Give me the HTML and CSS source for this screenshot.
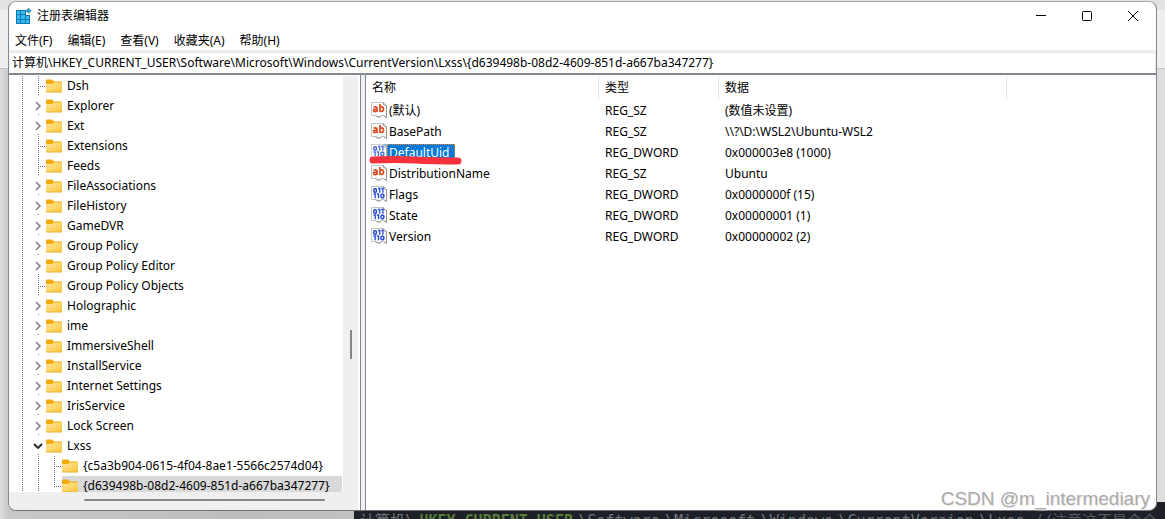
FILE: index.html
```html
<!DOCTYPE html>
<html lang="zh-CN">
<head>
<meta charset="utf-8">
<title>注册表编辑器</title>
<link rel="stylesheet" href="styles.css">
</head>
<body>
<svg class="symbols" aria-hidden="true">
  <defs>
    <linearGradient id="paper" x1="0" y1="0" x2="1" y2="1"><stop offset="0" stop-color="#ffe49b"/><stop offset="1" stop-color="#fcc83a"/></linearGradient>
  </defs>
  <symbol id="folder" viewBox="0 0 16 14">
    <path d="M0 1.5Q0 .5 1 .5H6L8 2.5H15Q16 2.5 16 3.5V8H0Z" fill="#f0ab09"/>
    <path d="M0 5H6L8 3.5H16V13H0Z" fill="url(#paper)"/>
    <path d="M0 13H16" stroke="#e9ae2b"/>
  </symbol>
  <symbol id="closed" viewBox="0 0 8 10"><path d="M2 1L6 5L2 9" fill="none" stroke="#858585" stroke-width="1.6"/></symbol>
  <symbol id="open" viewBox="0 0 10 8"><path d="M1 2L5 6L9 2" fill="none" stroke="#202020" stroke-width="1.8"/></symbol>
  <symbol id="sheet" viewBox="0 0 16 16">
    <path d="M.5 .5H12.5L15.500 3.500V15.500L12.500 13.500H11L9 15H7L4 13.500H.5Z" fill="#fbfbfb" stroke="#c4c4c4"/>
    <path d="M12.500 .5V2.500L15.500 3.500V15.500L12.500 13.500M10.500 13.500L9 15H7L4.500 13.500" fill="none" stroke="#969696"/>
  </symbol>
  <symbol id="text-value" viewBox="0 0 16 16">
    <use href="#sheet"/>
    <path d="M2.500 5.200Q6 4 6 6.500V10M6 7Q2.500 6.800 2.500 8.500Q3 10.300 6 9M9 2V10M9 5.500Q12.500 3.800 12.500 7Q12.300 10.300 9 9" fill="none" stroke="#dc4a20" stroke-width="1.700"/>
  </symbol>
  <symbol id="number-value" viewBox="0 0 16 16">
    <use href="#sheet"/>
    <rect x="2.800" y="2.800" width="2.600" height="3.400" rx="1" fill="none" stroke="#254bd0" stroke-width="1.500"/>
    <rect x="10" y="8.300" width="2.800" height="3.400" rx="1" fill="none" stroke="#254bd0" stroke-width="1.500"/>
    <path d="M7 2.500H8.700V6.800M10.200 2.500H11.900V6.800M2.500 8H4.200V12.300M5.800 8H7.500V12.300" fill="none" stroke="#254bd0" stroke-width="1.300"/>
  </symbol>
</svg>

<div class="terminal" aria-hidden="true">
  <span class="cjk">计算机\</span><b>HKEY_CURRENT_USER</b><span>\Software</span><span>\Microsoft</span><span>\Windows</span><span>\CurrentVersion</span><span>\Lxss</span><span class="note">//注意这不是个个</span>
</div>
<div class="backdrop-line first"></div>
<div class="backdrop-line second"></div>

<main class="window">
  <header class="titlebar">
    <svg class="app-icon" viewBox="0 0 16 16">
      <path d="M0 2H10L14 6V16H0Z" fill="#0f78ad"/>
      <path d="M1 3H4V6H1ZM5 3H9V6H5ZM1 7H4V11H1ZM5 7H9V11H5ZM10 8H13V11H10ZM1 12H4V15H1ZM5 12H9V15H5ZM10 12H13V15H10Z" fill="#35bdf0"/>
      <path d="M10 1H16V7H10Z" fill="#fff"/>
      <path d="M12.500 0L15.500 2.800L12.500 5.600L9.700 2.800Z" fill="#1d86ba"/><path d="M12.500 1L14 2.700L12.500 4Z" fill="#4cc5ef"/>
    </svg>
    <h1>注册表编辑器</h1>
    <div class="caption-buttons">
      <button aria-label="最小化"><svg viewBox="0 0 12 12"><path d="M1 5.500H11"/></svg></button>
      <button aria-label="最大化"><svg viewBox="0 0 12 12"><rect x="1.500" y="1.500" width="9" height="9" rx="1"/></svg></button>
      <button aria-label="关闭"><svg viewBox="0 0 12 12"><path d="M1 1L11 11M11 1L1 11"/></svg></button>
    </div>
  </header>
  <nav class="menu">
    <button>文件(F)</button><button>编辑(E)</button><button>查看(V)</button><button>收藏夹(A)</button><button>帮助(H)</button>
  </nav>
  <div class="address"><input aria-label="地址" value="计算机\HKEY_CURRENT_USER\Software\Microsoft\Windows\CurrentVersion\Lxss\{d639498b-08d2-4609-851d-a667ba347277}"></div>

  <div class="panes">
    <section class="tree-pane">
      <ul class="tree">
        <li><i class="guide"></i><i class="guide leaf"></i><svg class="folder"><use href="#folder"/></svg><span>Dsh</span></li>
        <li><i class="guide"></i><button class="toggle" aria-label="展开 Explorer"><svg><use href="#closed"/></svg></button><svg class="folder"><use href="#folder"/></svg><span>Explorer</span></li>
        <li><i class="guide"></i><button class="toggle" aria-label="展开 Ext"><svg><use href="#closed"/></svg></button><svg class="folder"><use href="#folder"/></svg><span>Ext</span></li>
        <li><i class="guide"></i><i class="guide leaf"></i><svg class="folder"><use href="#folder"/></svg><span>Extensions</span></li>
        <li><i class="guide"></i><i class="guide leaf"></i><svg class="folder"><use href="#folder"/></svg><span>Feeds</span></li>
        <li><i class="guide"></i><button class="toggle" aria-label="展开 FileAssociations"><svg><use href="#closed"/></svg></button><svg class="folder"><use href="#folder"/></svg><span>FileAssociations</span></li>
        <li><i class="guide"></i><button class="toggle" aria-label="展开 FileHistory"><svg><use href="#closed"/></svg></button><svg class="folder"><use href="#folder"/></svg><span>FileHistory</span></li>
        <li><i class="guide"></i><button class="toggle" aria-label="展开 GameDVR"><svg><use href="#closed"/></svg></button><svg class="folder"><use href="#folder"/></svg><span>GameDVR</span></li>
        <li><i class="guide"></i><button class="toggle" aria-label="展开 Group Policy"><svg><use href="#closed"/></svg></button><svg class="folder"><use href="#folder"/></svg><span>Group Policy</span></li>
        <li><i class="guide"></i><button class="toggle" aria-label="展开 Group Policy Editor"><svg><use href="#closed"/></svg></button><svg class="folder"><use href="#folder"/></svg><span>Group Policy Editor</span></li>
        <li><i class="guide"></i><i class="guide leaf"></i><svg class="folder"><use href="#folder"/></svg><span>Group Policy Objects</span></li>
        <li><i class="guide"></i><button class="toggle" aria-label="展开 Holographic"><svg><use href="#closed"/></svg></button><svg class="folder"><use href="#folder"/></svg><span>Holographic</span></li>
        <li><i class="guide"></i><button class="toggle" aria-label="展开 ime"><svg><use href="#closed"/></svg></button><svg class="folder"><use href="#folder"/></svg><span>ime</span></li>
        <li><i class="guide"></i><button class="toggle" aria-label="展开 ImmersiveShell"><svg><use href="#closed"/></svg></button><svg class="folder"><use href="#folder"/></svg><span>ImmersiveShell</span></li>
        <li><i class="guide"></i><button class="toggle" aria-label="展开 InstallService"><svg><use href="#closed"/></svg></button><svg class="folder"><use href="#folder"/></svg><span>InstallService</span></li>
        <li><i class="guide"></i><button class="toggle" aria-label="展开 Internet Settings"><svg><use href="#closed"/></svg></button><svg class="folder"><use href="#folder"/></svg><span>Internet Settings</span></li>
        <li><i class="guide"></i><button class="toggle" aria-label="展开 IrisService"><svg><use href="#closed"/></svg></button><svg class="folder"><use href="#folder"/></svg><span>IrisService</span></li>
        <li><i class="guide"></i><button class="toggle" aria-label="展开 Lock Screen"><svg><use href="#closed"/></svg></button><svg class="folder"><use href="#folder"/></svg><span>Lock Screen</span></li>
        <li><i class="guide"></i><button class="toggle" aria-label="折叠 Lxss"><svg class="down"><use href="#open"/></svg></button><svg class="folder"><use href="#folder"/></svg><span>Lxss</span></li>
        <li><i class="guide"></i><i class="guide"></i><i class="guide leaf"></i><svg class="folder"><use href="#folder"/></svg><span>{c5a3b904-0615-4f04-8ae1-5566c2574d04}</span></li>
        <li><i class="guide"></i><i class="guide"></i><i class="guide leaf last"></i><div class="selected-key"><svg class="folder"><use href="#folder"/></svg><span>{d639498b-08d2-4609-851d-a667ba347277}</span></div></li>
      </ul>
      <div class="scroll-y"><div class="thumb"></div></div>
      <div class="scroll-x"><div class="thumb"></div></div>
    </section>
    <div class="splitter"></div>
    <section class="list-pane">
      <table>
        <colgroup><col class="col-name"><col class="col-type"><col class="col-data"><col></colgroup>
        <thead><tr><th>名称</th><th>类型</th><th>数据</th><td></td></tr></thead>
        <tbody>
          <tr><td><div class="value"><svg><use href="#text-value"/></svg><span>(默认)</span></div></td><td>REG_SZ</td><td>(数值未设置)</td></tr>
          <tr><td><div class="value"><svg><use href="#text-value"/></svg><span>BasePath</span></div></td><td>REG_SZ</td><td>\\?\D:\WSL2\Ubuntu-WSL2</td></tr>
          <tr><td><div class="value selected"><svg><use href="#number-value"/></svg><span>DefaultUid</span><svg class="marker" viewBox="0 0 94 10"><path d="M4 5Q25 4 45 5T89 6" fill="none" stroke="#f8323c" stroke-width="7" stroke-linecap="round"/></svg></div></td><td>REG_DWORD</td><td>0x000003e8 (1000)</td></tr>
          <tr><td><div class="value"><svg><use href="#text-value"/></svg><span>DistributionName</span></div></td><td>REG_SZ</td><td>Ubuntu</td></tr>
          <tr><td><div class="value"><svg><use href="#number-value"/></svg><span>Flags</span></div></td><td>REG_DWORD</td><td>0x0000000f (15)</td></tr>
          <tr><td><div class="value"><svg><use href="#number-value"/></svg><span>State</span></div></td><td>REG_DWORD</td><td>0x00000001 (1)</td></tr>
          <tr><td><div class="value"><svg><use href="#number-value"/></svg><span>Version</span></div></td><td>REG_DWORD</td><td>0x00000002 (2)</td></tr>
        </tbody>
      </table>
    </section>
  </div>
</main>
<div class="watermark">CSDN @m_intermediary</div>
</body>
</html>
```
FILE: styles.css
```css
* { box-sizing: border-box; }

body {
  margin: 0;
  height: 100vh;
  display: flex;
  overflow: hidden;
  position: relative;
  padding: 1px 8px 8px;
  background: linear-gradient(90deg, #dcdcdc, #c8c8c8 8px, #bdbdbd 20%, #d6d6d6 95%, #dedede);
  color: #000;
  font: 12px/20px "Noto Sans", "Noto Sans CJK SC", sans-serif;
}

button, input {
  border: 0;
  padding: 0;
  background: none;
  color: inherit;
  font: inherit;
}

ul { margin: 0; padding: 0; list-style: none; }
svg { display: block; flex: none; }
.symbols { position: absolute; width: 0; height: 0; }

/* Desktop behind the window */
.backdrop-line { position: absolute; left: 0; right: 0; border-top: 1px solid #c4c4c4; }
.backdrop-line.first { top: 0; height: 68px; border-top: 10px solid #e3e3e3; background: #efefef; }
.backdrop-line.second { top: 68px; }

.terminal {
  position: absolute;
  left: 354px;
  right: 0;
  bottom: 0;
  height: 17px;
  padding: 10px 8px 0 6px;
  display: flex;
  justify-content: space-between;
  overflow: hidden;
  white-space: nowrap;
  background: #1d2026;
  color: #70747a;
  font: 15px/18px "DejaVu Sans Mono", "Noto Sans CJK SC", monospace;
}
.terminal b { color: #587b3c; }
.terminal .note { padding-left: 4px; color: #555960; }

.window {
  position: relative;
  flex: 1;
  min-width: 0;
  display: flex;
  flex-direction: column;
  overflow: hidden;
  background: #fff;
  border: 1px solid #9b9b9b;
  border-color: #aaa #828790 #6f7278;
  border-radius: 8px;
}

.titlebar { display: flex; align-items: center; height: 28px; padding-left: 7px; }
.app-icon { width: 16px; height: 16px; }
.titlebar h1 { margin: 0 0 0 5px; font-size: 12px; font-weight: 400; }
.caption-buttons { display: flex; margin-left: auto; }
.caption-buttons button { width: 46px; height: 28px; display: grid; place-items: center; }
.caption-buttons svg { width: 12px; height: 12px; fill: none; stroke: #000; }

.menu { display: flex; gap: 15px; height: 20px; padding-left: 6px; }
.menu button { line-height: 22px; }

.address { padding: 2px 0 0; background: #efefef; border-bottom: 2px solid #828790; }
.address input { display: block; width: 100%; height: 21px; padding: 0 3px 2px; border: 1px solid #e5e5e5; border-width: 1px 1px 0 0; background: #fff; }

.panes { flex: 1; min-height: 0; display: flex; padding-top: 1px; }

.tree-pane {
  flex: none;
  width: 351px;
  min-height: 0;
  display: grid;
  grid-template: minmax(0, 1fr) 18px / minmax(0, 1fr) 15px;
  padding-right: 2px;
}
.tree { overflow: hidden; padding-left: 5px; white-space: nowrap; }
.tree li { display: flex; align-items: center; height: 20px; }
.guide, .toggle { flex: none; width: 16px; height: 20px; }
.guide { background: repeating-linear-gradient(#777 0 1px, transparent 1px 2px) 8px 0 / 1px 100% no-repeat; }
.guide.leaf {
  background:
    repeating-linear-gradient(#777 0 1px, transparent 1px 2px) 8px 0 / 1px 100% no-repeat,
    repeating-linear-gradient(90deg, #777 0 1px, transparent 1px 2px) 8px 10px / 8px 1px no-repeat;
}
.guide.leaf.last { background-size: 1px 10px, 8px 1px; }
.toggle {
  display: grid;
  place-items: center;
  background: repeating-linear-gradient(#777 0 1px, transparent 1px 2px) 8px 18px / 1px 2px no-repeat;
}
.toggle svg { width: 8px; height: 10px; }
.toggle svg.down { width: 10px; height: 8px; }
.folder { width: 16px; height: 14px; margin-right: 5px; }
.selected-key { display: flex; align-items: center; height: 20px; padding-right: 12px; background: #d9d9d9; }

.scroll-y { display: flex; flex-direction: column; align-items: center; background: #efefef; padding-top: 254px; }
.scroll-y .thumb { width: 2px; height: 29px; background: #858585; }
.scroll-x { grid-column: 1 / -1; background: #efefef; padding: 7px 33px 0 75px; }
.scroll-x .thumb { height: 2px; background: #858585; border-radius: 1px; }

.splitter { flex: none; width: 6px; margin-top: -1px; background: #efefef; border: solid #828790; border-width: 0 1px; }

.list-pane { flex: 1; min-width: 0; overflow: hidden; }
table { width: 100%; table-layout: fixed; border-collapse: separate; border-spacing: 0; }
.col-name { width: 233px; }
.col-type { width: 120px; }
.col-data { width: 288px; }
th, td { padding: 0 0 0 6px; height: 21px; text-align: left; font-weight: 400; white-space: nowrap; }
thead th { height: 24px; border-right: 1px solid #e5e5e5; }
tbody td:first-child { padding-left: 5px; }
.value { position: relative; display: flex; align-items: center; height: 21px; }
.value svg { width: 16px; height: 16px; align-self: flex-start; margin-top: 2px; }
.value span { padding: 0 6px 0 2px; height: 18px; line-height: 18px; }
.value.selected span { background: #0078d7; color: #fff; outline: 1px dotted #e08a3c; outline-offset: -1px; }
.value.selected svg:first-child { background: #5fa9e5; opacity: 0.8; }
.value svg.marker { position: absolute; left: -2px; top: 13px; width: 94px; height: 10px; margin: 0; }

.watermark {
  position: absolute;
  right: 15px;
  bottom: 8px;
  color: #aaa;
  font: 19px/24px "Liberation Sans", Arial, sans-serif;
  text-shadow: 1px 1px 1px #e5e5e5;
}
```
